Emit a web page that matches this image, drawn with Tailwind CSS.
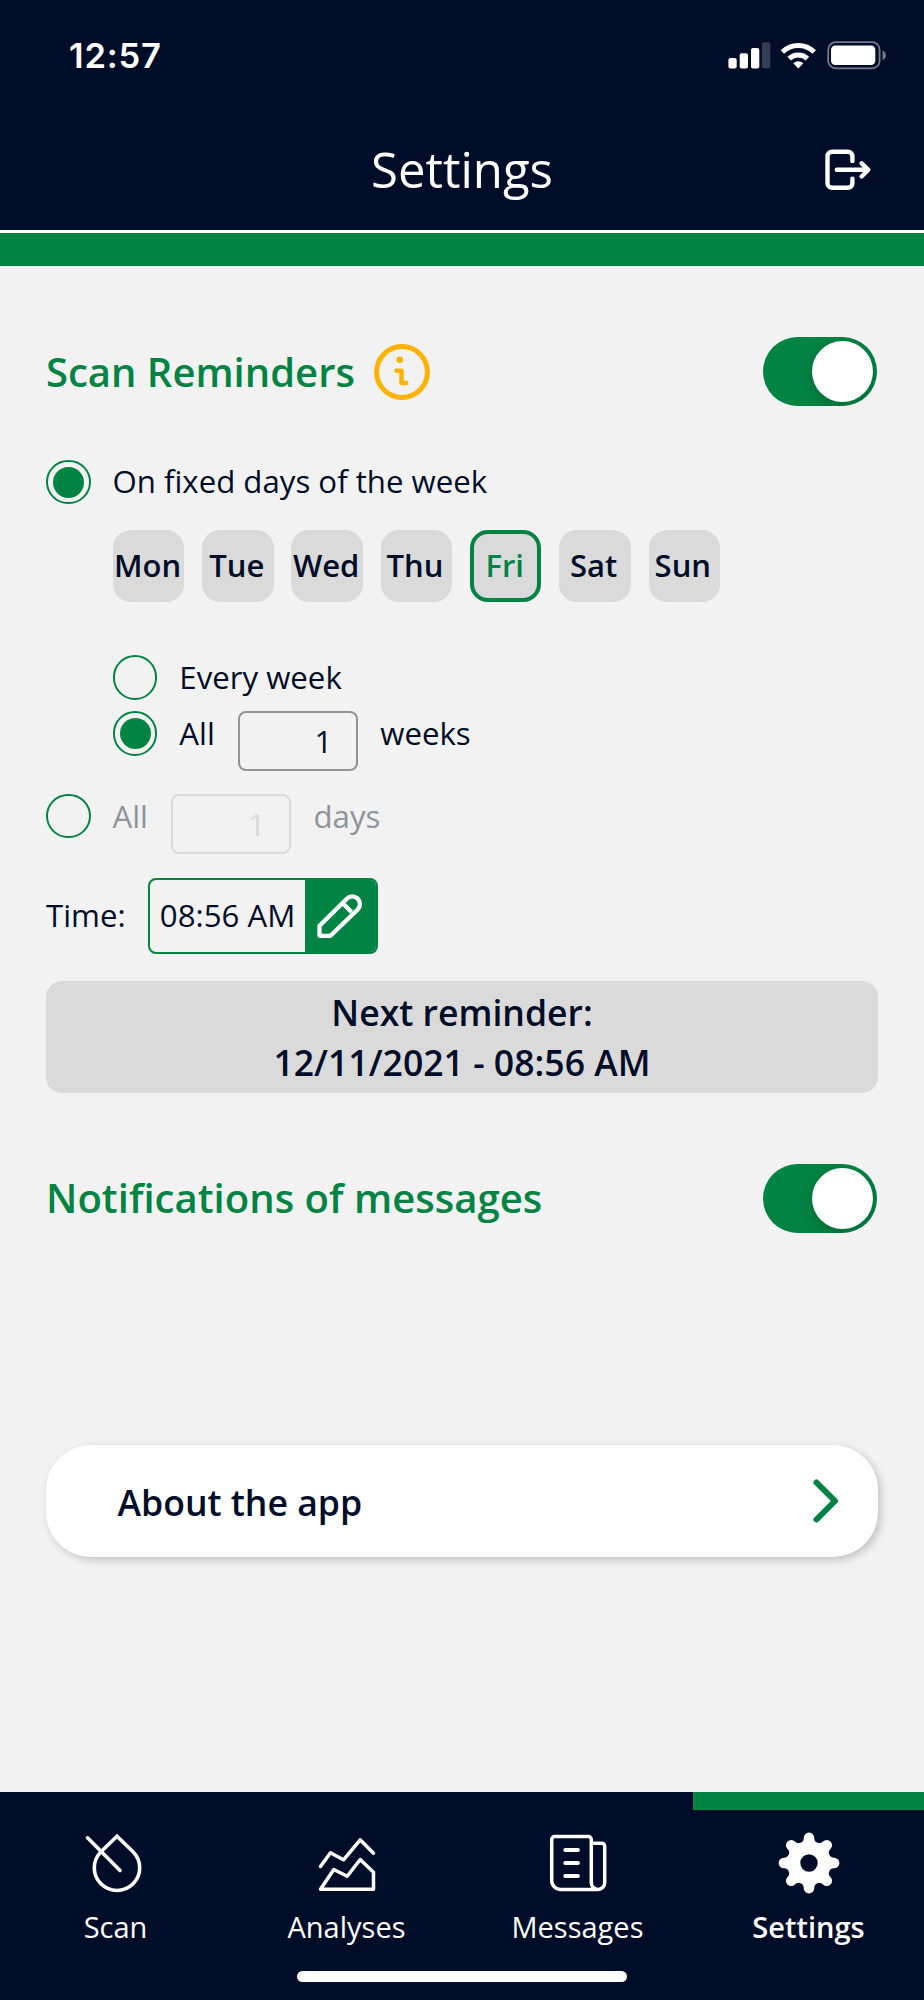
<!DOCTYPE html>
<html lang="en">
<head>
<meta charset="utf-8">
<title>Settings</title>
<script src="https://cdn.jsdelivr.net/npm/@tailwindcss/browser@4"></script>
</head>
<body class="bg-[#f2f2f2]">
<div class="w-[924px] h-[2000px] flex flex-col overflow-hidden bg-[#f2f2f2] text-[#000d28] font-['Open_Sans',sans-serif] text-[31.2px] whitespace-nowrap">
  <header class="h-[230px] shrink-0 bg-[#000d28] text-white flex flex-col">
    <div class="h-[112px] flex justify-between pl-[69px] pr-[36px]">
      <span class="font-['Inter',sans-serif] font-semibold text-[34.5px] tracking-[0.8px] leading-[112px]">12:57</span>
      <svg class="w-[160px] h-[32px] mt-[39px]" viewBox="728 39 160 32" fill="none">
        <g fill="#fff"><rect x="728.4" y="58" width="8.3" height="10.5" rx="2"/><rect x="739.7" y="53.3" width="8.3" height="15.2" rx="2"/><rect x="751" y="48" width="8.3" height="20.5" rx="2"/><rect x="762" y="42.3" width="8.3" height="26.2" rx="2" fill="#333d53"/></g>
        <path d="M782.4 52a22.6 22.6 0 0 1 31.8 0M789.2 58.6a13 13 0 0 1 18.2 0" stroke="#fff" stroke-width="5"/>
        <path d="M793.3 63.2a7.4 7.4 0 0 1 10 0l-5 5.4z" fill="#fff"/>
        <rect x="828.2" y="42.2" width="51.4" height="26.2" rx="7.5" stroke="#737a89" stroke-width="1.8"/>
        <rect x="831" y="45.5" width="44.3" height="19.5" rx="4.3" fill="#fff"/>
        <path d="M882.5 50.5c4.6 1.6 4.6 8 0 9.6z" fill="#737a89"/>
      </svg>
    </div>
    <div class="h-[114px] grid grid-cols-[1fr_auto_1fr] items-center">
      <span></span>
      <h1 class="text-[49.1px] leading-[60px]">Settings</h1>
      <svg class="w-[50px] h-[46px] justify-self-end mr-[50px]" viewBox="824 146 50 46" fill="none" stroke="#fff" stroke-width="4.4" stroke-linecap="round" stroke-linejoin="round"><path d="M852.4 161v-4.7a4.5 4.5 0 0 0-4.5-4.5h-15.9a4.5 4.5 0 0 0-4.5 4.5v26.9a4.500 4.500 0 0 0 4.500 4.500h15.900a4.500 4.500 0 0 0 4.500-4.500v-4.400M836.800 169.800h31M861.600 163.300l6.700 6.500-6.700 6.700"/></svg>
    </div>
  </header>
  <div class="h-[3px] shrink-0 bg-white"></div>
  <div class="h-[32.5px] shrink-0 bg-[#008343]"></div>

  <main class="flex flex-col px-[46px] h-[1526.5px] shrink-0">
    <div class="mt-[71.5px] h-[69px] flex items-center">
      <h2 class="text-[#008343] text-[40px] leading-[50px] font-semibold pt-px">Scan Reminders</h2>
      <svg class="w-[56px] h-[56px] ml-[19px]" viewBox="373.7 343.7 56 56" fill="none" stroke="#ffb300"><circle cx="401.7" cy="371.7" r="25.4" stroke-width="5"/><circle cx="399.4" cy="359.4" r="3.3" fill="#ffb300" stroke="none"/><path d="M396.2 370.5h5v12.2h4.600" stroke-width="4.6" stroke-linecap="round" stroke-linejoin="round"/></svg>
      <div class="ml-auto mr-px w-[114px] h-[69px] rounded-full overflow-hidden bg-[#008343] flex items-center justify-end pr-1"><div class="size-[61px] rounded-full bg-white shadow-[0_4px_14px_rgba(0,0,0,0.2)]"></div></div>
    </div>

    <div class="mt-[53.5px] h-[45px] flex items-center">
      <span class="size-[44.5px] rounded-full border-2 border-[#008343] flex items-center justify-center"><span class="size-[31px] rounded-full bg-[#008343]"></span></span>
      <span class="ml-[22px] pb-px">On fixed days of the week</span>
    </div>

    <div class="mt-[25.5px] ml-[66.8px] h-[71.5px] flex gap-[17.8px] text-[31px] font-semibold leading-[70.5px] text-center">
      <span class="w-[71.5px] pr-[2px] rounded-[18px] bg-[#dadada] flex justify-center">Mon</span>
      <span class="w-[71.5px] pr-[2px] rounded-[18px] bg-[#dadada] flex justify-center">Tue</span>
      <span class="w-[71.5px] pr-[2px] rounded-[18px] bg-[#dadada] flex justify-center">Wed</span>
      <span class="w-[71.5px] pr-[3px] rounded-[18px] bg-[#dadada] flex justify-center">Thu</span>
      <span class="w-[71.5px] pr-[2px] rounded-[18px] bg-[#dadada] border-4 border-[#008343] text-[#008343] flex justify-center leading-[62.5px]">Fri</span>
      <span class="w-[71.5px] pr-[3px] rounded-[18px] bg-[#dadada] flex justify-center">Sat</span>
      <span class="w-[71.5px] pr-[3px] rounded-[18px] bg-[#dadada] flex justify-center">Sun</span>
    </div>

    <div class="mt-[53.5px] ml-[66.8px] h-[45px] flex items-center">
      <span class="size-[44.5px] rounded-full border-2 border-[#008343]"></span>
      <span class="ml-[22px] pb-px">Every week</span>
    </div>
    <div class="mt-[11px] ml-[66.8px] h-[60px] flex items-start">
      <span class="size-[44.5px] rounded-full border-2 border-[#008343] flex items-center justify-center"><span class="size-[31px] rounded-full bg-[#008343]"></span></span>
      <span class="ml-[22px] w-[58.5px] leading-[44px]">All</span>
      <span class="w-[120px] h-[60px] rounded-lg border-2 border-[#8f949b] text-right pr-[23.5px] leading-[57px]">1</span>
      <span class="ml-[22.5px] leading-[44px]">weeks</span>
    </div>
    <div class="mt-[22.5px] h-[60px] flex items-start text-[#8f949b]">
      <span class="size-[44.5px] rounded-full border-2 border-[#008343]"></span>
      <span class="ml-[22px] w-[58.5px] leading-[44px]">All</span>
      <span class="w-[120px] h-[60px] rounded-lg border-2 border-[#dadada] text-[#dadada] text-right pr-[23.5px] leading-[57px]">1</span>
      <span class="ml-[22.5px] leading-[44px]">days</span>
    </div>

    <div class="mt-[24.5px] h-[76px] flex items-center">
      <span class="w-[102.3px] pb-px">Time:</span>
      <div class="w-[229.7px] h-[76px] rounded-lg border-2 border-[#008343] flex overflow-hidden">
        <span class="w-[154.5px] text-center leading-[71px]">08:56 AM</span>
        <span class="flex-1 bg-[#008343]"><svg class="w-[50px] h-[50px] ml-[9.5px] mt-[10.5px]" viewBox="314.5 890.5 50 50" fill="none" stroke="#fff" stroke-width="4.3" stroke-linejoin="round"><path d="M320 935.3V925.3L347.3 898.2A7.6 7.6 0 0 1 358.2 909L331 935.300ZM343 902.500l9 9"/></svg></span>
      </div>
    </div>

    <div class="mt-[27px] h-[111.5px] rounded-[16px] bg-[#dadada] flex flex-col items-center justify-center text-[35.6px] leading-[50px] font-semibold">
      <p>Next reminder:</p>
      <p>12/11/2021 - 08:56 AM</p>
    </div>

    <div class="mt-[71.5px] h-[69px] flex items-center justify-between">
      <h2 class="text-[#008343] text-[40.1px] leading-[50px] font-semibold pb-px">Notifications of messages</h2>
      <div class="mr-px w-[114px] h-[69px] rounded-full overflow-hidden bg-[#008343] flex items-center justify-end pr-1"><div class="size-[61px] rounded-full bg-white shadow-[0_4px_14px_rgba(0,0,0,0.2)]"></div></div>
    </div>

    <div class="mt-[212px] h-[111.5px] rounded-[45px] bg-white shadow-[3px_3px_8px_rgba(0,0,0,0.2)] flex items-center justify-between pl-[71.5px] pr-[34px]">
      <span class="text-[35.6px] leading-[50px] font-semibold pt-0.5">About the app</span>
      <svg class="w-[32px] h-[48px]" viewBox="812 1477 32 48" fill="none" stroke="#008343" stroke-width="6" stroke-linecap="round" stroke-linejoin="round"><path d="M816.5 1482.5l18.5 18.5-18.5 18.5"/></svg>
    </div>
  </main>

  <nav class="h-[208px] shrink-0 bg-[#000d28] text-white flex flex-col items-center text-[29px]">
    <div class="grid grid-cols-4 w-full h-[179px]">
      <div class="flex flex-col items-center pt-[38px]">
        <svg class="w-[66px] h-[66px]" viewBox="83 1829.5 66 66" fill="none" stroke="#fff" stroke-width="3.6" stroke-linecap="round"><path d="M117 1835.7L101 1851.2a22.7 22.7 0 1 0 32 0ZM87.5 1837.3L120 1870"/></svg>
        <span class="leading-[61px]">Scan</span>
      </div>
      <div class="flex flex-col items-center pt-[38px]">
        <svg class="w-[66px] h-[66px]" viewBox="313.5 1829.5 66 66" fill="none" stroke="#fff" stroke-width="3.5" stroke-linecap="round" stroke-linejoin="round"><path d="M320 1866l10-13.700 13 7 16.700-20 13.300 13.400M320 1888.700l13.300-19.700 13.400 6.700 13-16.700 13.300 12.700v17z"/></svg>
        <span class="leading-[61px]">Analyses</span>
      </div>
      <div class="flex flex-col items-center pt-[38px]">
        <svg class="w-[66px] h-[66px]" viewBox="545 1829.5 66 66" fill="none" stroke="#fff" stroke-width="3.5" stroke-linecap="round"><path d="M591.3 1882.3V1839a3 3 0 0 0-3-3H554.7a3 3 0 0 0-3 3V1880a9 9 0 0 0 9 9H598a6.700 6.700 0 0 0 6.700-6.700V1845.700a3 3 0 0 0-3-3H591.300M591.300 1882.300a6.700 6.700 0 0 0 6.700 6.700"/><path stroke-width="4" d="M565.3 1849.6h12.6M565.3 1862.5h12.6M565.3 1875.6h12.6"/></svg>
        <span class="leading-[61px]">Messages</span>
      </div>
      <div class="flex flex-col items-center border-t-[18px] border-[#008343] pt-[20px]">
        <svg class="w-[66px] h-[66px]" viewBox="-33 -33 66 66" fill="#fff"><path fill-rule="evenodd" d="M-5.3-25.1A5.3 5.3 0 0 1 5.3-25.1A5 5 0 0 0 14-21.5A5.3 5.3 0 0 1 21.5-14A5 5 0 0 0 25.1-5.3A5.3 5.3 0 0 1 25.1 5.3A5 5 0 0 0 21.5 14A5.3 5.3 0 0 1 14 21.5A5 5 0 0 0 5.3 25.1A5.3 5.3 0 0 1-5.3 25.1A5 5 0 0 0-14 21.5A5.3 5.3 0 0 1-21.5 14A5 5 0 0 0-25.1 5.3A5.3 5.3 0 0 1-25.1-5.3A5 5 0 0 0-21.5-14A5.3 5.3 0 0 1-14-21.5A5 5 0 0 0-5.3-25.1ZM0-8.7A8.7 8.7 0 1 0 0 8.7A8.7 8.7 0 1 0 0-8.7Z"/></svg>
        <span class="leading-[61px] font-semibold">Settings</span>
      </div>
    </div>
    <div class="w-[330px] h-[11px] rounded-full bg-white"></div>
  </nav>
</div>
</body>
</html>
